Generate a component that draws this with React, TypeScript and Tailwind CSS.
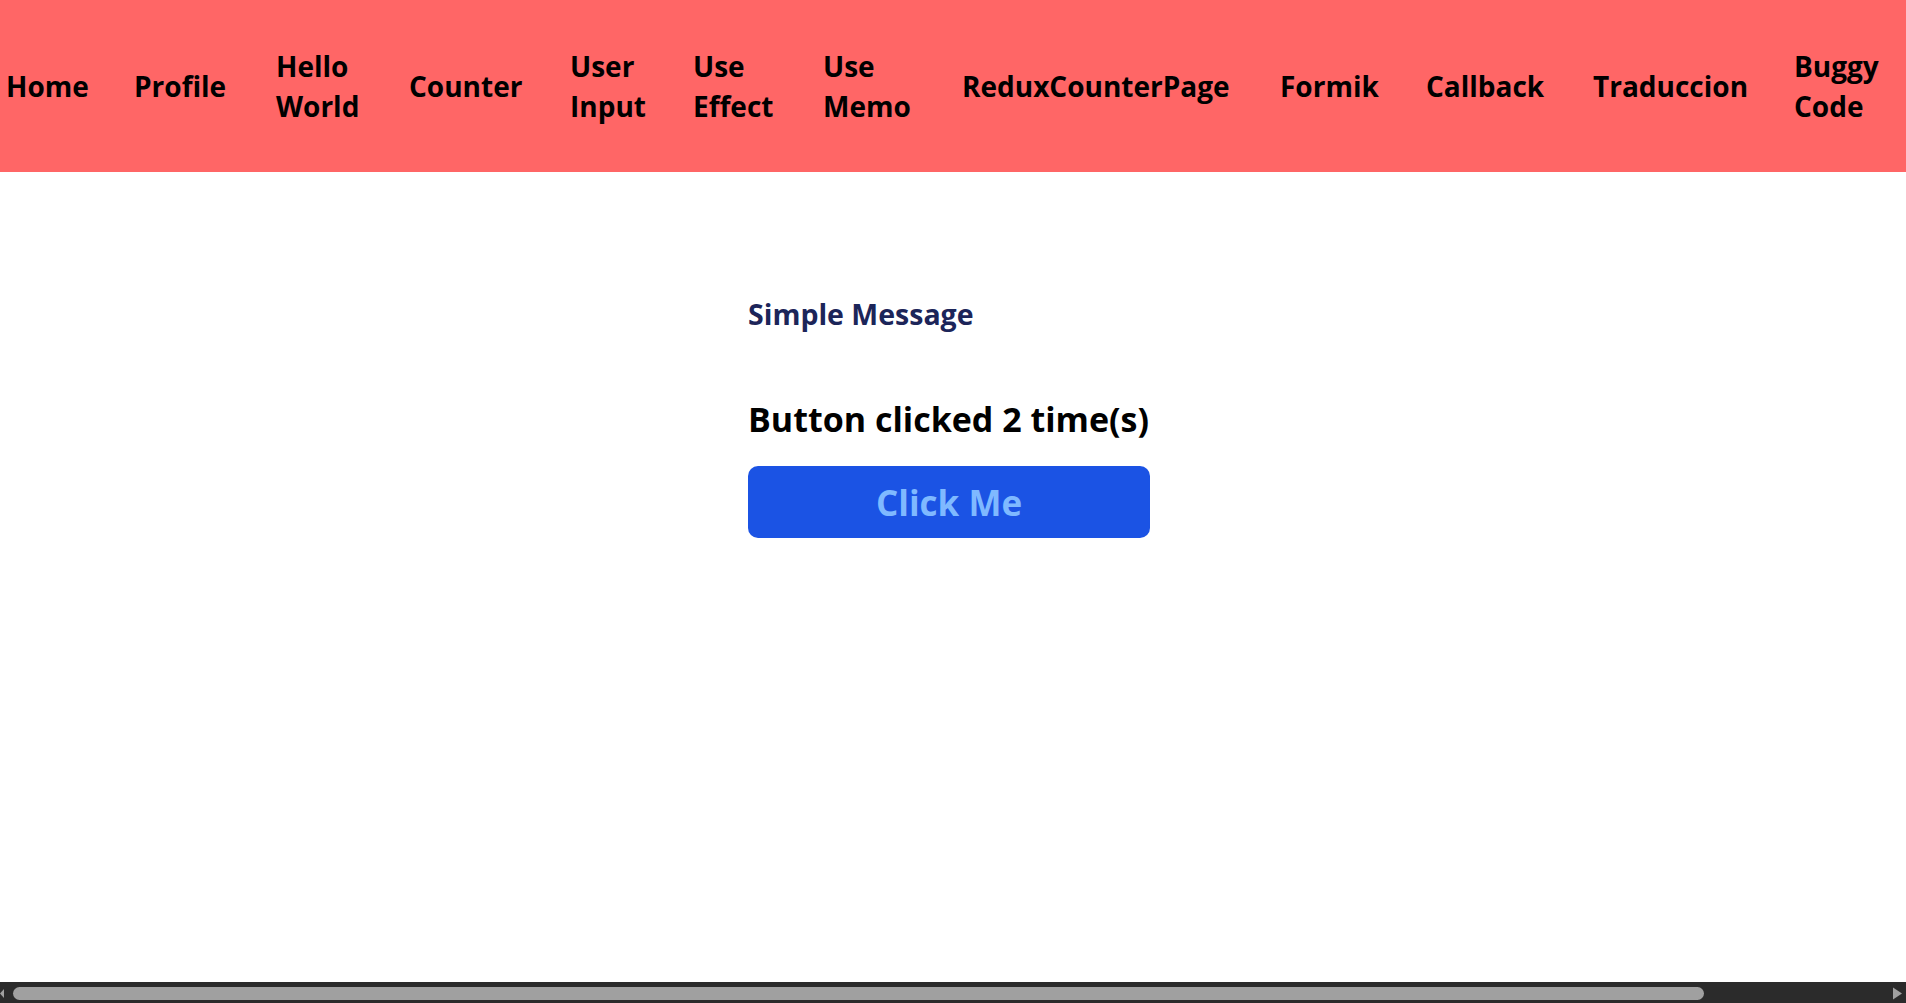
import React from "react";

const links = [
  { label: "Home", w: "w-[128px]" },
  { label: "Profile", w: "w-[142px]" },
  { label: "Hello World", w: "w-[133px]" },
  { label: "Counter", w: "w-[161px]" },
  { label: "User Input", w: "w-[123px]" },
  { label: "Use Effect", w: "w-[130px]" },
  { label: "Use Memo", w: "w-[139px]" },
  { label: "ReduxCounterPage", w: "w-[318px]" },
  { label: "Formik", w: "w-[146px]" },
  { label: "Callback", w: "w-[167px]" },
  { label: "Traduccion", w: "w-[201px]" },
  { label: "Buggy Code", w: "w-[110px]" },
];

function Navbar() {
  return (
    <nav className="h-[172px] bg-[#ff6666] flex items-center pl-[6px]">
      <ul className="flex items-center">
        {links.map((l) => (
          <li key={l.label} className={`${l.w} shrink-0`}>
            <a href="#" className="block w-min text-[28px] leading-[40px] font-bold text-black">
              {l.label}
            </a>
          </li>
        ))}
      </ul>
    </nav>
  );
}

function FakeScrollbar() {
  return (
    <div className="fixed bottom-0 left-0 right-0 h-[21px] bg-[#2b2b2b]">
      <svg className="absolute left-0 top-[5px]" width="5" height="13" viewBox="0 0 5 13">
        <path d="M0 6.5 L4 2 L4 11 Z" fill="#a0a0a0" />
      </svg>
      <div className="absolute left-[13px] top-[5px] w-[1691px] h-[13px] rounded-full bg-[#a0a0a0]" />
      <svg className="absolute left-[1892px] top-[5px]" width="11" height="13" viewBox="0 0 11 13">
        <path d="M1 0.5 L10 6.5 L1 12.5 Z" fill="#a0a0a0" />
      </svg>
    </div>
  );
}

export default function App() {
  const [count, setCount] = React.useState(2);
  return (
    <div className="h-screen overflow-hidden bg-white font-['Open_Sans','Liberation_Sans',sans-serif]">
      <Navbar />
      <main className="w-[410px] mx-auto pt-[122px]">
        <h2 className="text-[28.5px] leading-[40px] font-bold text-[#1c2559]">Simple Message</h2>
        <h3 className="mt-[65px] text-[34px] leading-[40px] font-bold text-black">
          Button clicked {count} time(s)
        </h3>
        <button
          onClick={() => setCount(count + 1)}
          className="mt-[27px] w-[402px] h-[72px] rounded-[10px] bg-[#1b53e4] text-[#7fb9ff] text-[35px] font-bold leading-none"
        >
          Click Me
        </button>
      </main>
      <FakeScrollbar />
    </div>
  );
}
